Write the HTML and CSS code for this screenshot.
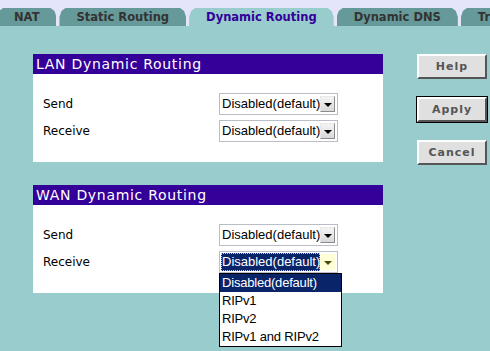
FILE: index.html
```html
<!DOCTYPE html>
<html>
<head>
<meta charset="utf-8">
<link rel="stylesheet" href="styles.css">
</head>
<body>
<div class="tabbar">
  <div class="tab">NAT</div>
  <div class="tab">Static Routing</div>
  <div class="tab active">Dynamic Routing</div>
  <div class="tab">Dynamic DNS</div>
  <div class="tab">Traffic Control</div>
</div>
<div class="main">
  <div class="sections">
    <div class="box">
      <div class="box-head">LAN Dynamic Routing</div>
      <div class="box-body">
        <div class="row">
          <div class="label">Send</div>
          <div class="select"><span class="sel-text">Disabled(default)</span><span class="sel-btn"><span class="arrow"></span></span></div>
        </div>
        <div class="row">
          <div class="label">Receive</div>
          <div class="select"><span class="sel-text">Disabled(default)</span><span class="sel-btn"><span class="arrow"></span></span></div>
        </div>
      </div>
    </div>
    <div class="box">
      <div class="box-head">WAN Dynamic Routing</div>
      <div class="box-body">
        <div class="row">
          <div class="label">Send</div>
          <div class="select"><span class="sel-text">Disabled(default)</span><span class="sel-btn"><span class="arrow"></span></span></div>
        </div>
        <div class="row">
          <div class="label">Receive</div>
          <div class="select focused"><span class="sel-text">Disabled(default)</span><span class="sel-btn"><span class="arrow"></span></span>
            <div class="dropdown">
              <div class="opt selected">Disabled(default)</div>
              <div class="opt">RIPv1</div>
              <div class="opt">RIPv2</div>
              <div class="opt">RIPv1 and RIPv2</div>
            </div>
          </div>
        </div>
      </div>
    </div>
  </div>
  <div class="buttons">
    <div class="btn">Help</div>
    <div class="btn default">Apply</div>
    <div class="btn">Cancel</div>
  </div>
</div>
</body>
</html>
```
FILE: styles.css
```css
html, body {
  margin: 0;
  padding: 0;
}
body {
  background: #99cccc;
  width: 490px;
  height: 351px;
  overflow: hidden;
  font-family: "DejaVu Sans", Verdana, sans-serif;
}
.tabbar {
  background: #e4e4fa;
  height: 26px;
  box-sizing: border-box;
  padding-top: 8px;
  display: flex;
  gap: 3px;
  margin-left: -3px;
  overflow: hidden;
}
.tab {
  flex-shrink: 0;
  height: 18px;
  line-height: 19px;
  padding: 0 17px;
  background: #669999;
  color: #333333;
  font-weight: bold;
  font-size: 11.5px;
  white-space: nowrap;
  clip-path: polygon(6px 0, calc(100% - 6px) 0, calc(100% - 2px) 3px, 100% 9px, 100% 100%, 0 100%, 0 9px, 2px 3px);
}
.tab.active {
  background: #99cccc;
  color: #330099;
}
.main {
  display: flex;
  padding-top: 28px;
}
.sections {
  margin-left: 33px;
  width: 350px;
  display: flex;
  flex-direction: column;
  gap: 23px;
}
.box {
  background: #ffffff;
}
.box-head {
  background: #330099;
  color: #ffffff;
  font-size: 14px;
  letter-spacing: 0.7px;
  height: 20px;
  line-height: 20px;
  padding-left: 3px;
  white-space: nowrap;
}
.box-body {
  padding: 19px 0 20px 10px;
  display: flex;
  flex-direction: column;
  gap: 5px;
}
.row {
  display: flex;
  align-items: center;
  height: 22px;
}
.label {
  width: 176px;
  font-size: 12px;
  color: #000000;
}
.select {
  position: relative;
  width: 119px;
  height: 22px;
  box-sizing: border-box;
  border: 1px solid #b9bec6;
  background: #ffffff;
  display: flex;
  align-items: center;
  padding: 1px;
  font-family: "Liberation Sans", Arial, sans-serif;
  font-size: 13px;
}
.sel-text {
  flex: 1;
  height: 18px;
  line-height: 18px;
  padding-left: 1px;
  white-space: nowrap;
  box-sizing: border-box;
}
.sel-btn {
  width: 16px;
  height: 16px;
  box-sizing: border-box;
  margin-right: 1px;
  background: linear-gradient(#f4f4f4, #d8d8d8);
  border: 1px solid #a0a0a0;
  border-color: #e8e8e8 #8c8c8c #8c8c8c #e8e8e8;
  display: flex;
  align-items: center;
  justify-content: center;
}
.arrow {
  width: 0;
  height: 0;
  border-left: 4px solid transparent;
  border-right: 4px solid transparent;
  border-top: 4px solid #000000;
  margin-top: 1px;
}
.focused .sel-text {
  background: #0a246a;
  color: #ffffff;
  outline: 1px dotted #e0d080;
  outline-offset: -1px;
}
.focused .sel-btn {
  background: #ffffd8;
  border-color: #ffffd8;
}
.focused .arrow {
  border-top-color: #4a4a10;
}
.dropdown {
  position: absolute;
  left: -1px;
  top: 21px;
  width: 123px;
  box-sizing: border-box;
  border: 1px solid #000000;
  background: #ffffff;
  z-index: 5;
}
.opt {
  height: 18px;
  line-height: 18px;
  padding-left: 2px;
  white-space: nowrap;
  letter-spacing: -0.2px;
}
.opt.selected {
  background: #0a246a;
  color: #ffffff;
}
.buttons {
  margin-left: 34px;
  display: flex;
  flex-direction: column;
  gap: 18px;
}
.btn {
  width: 70px;
  height: 25px;
  box-sizing: border-box;
  background: #e0e0e0;
  border: 2px solid;
  border-color: #ffffff #555555 #555555 #ffffff;
  color: #555555;
  font-weight: bold;
  font-size: 11px;
  letter-spacing: 1px;
  text-align: center;
  line-height: 21px;
}
.btn.default {
  outline: 1px solid #000000;
}
```
